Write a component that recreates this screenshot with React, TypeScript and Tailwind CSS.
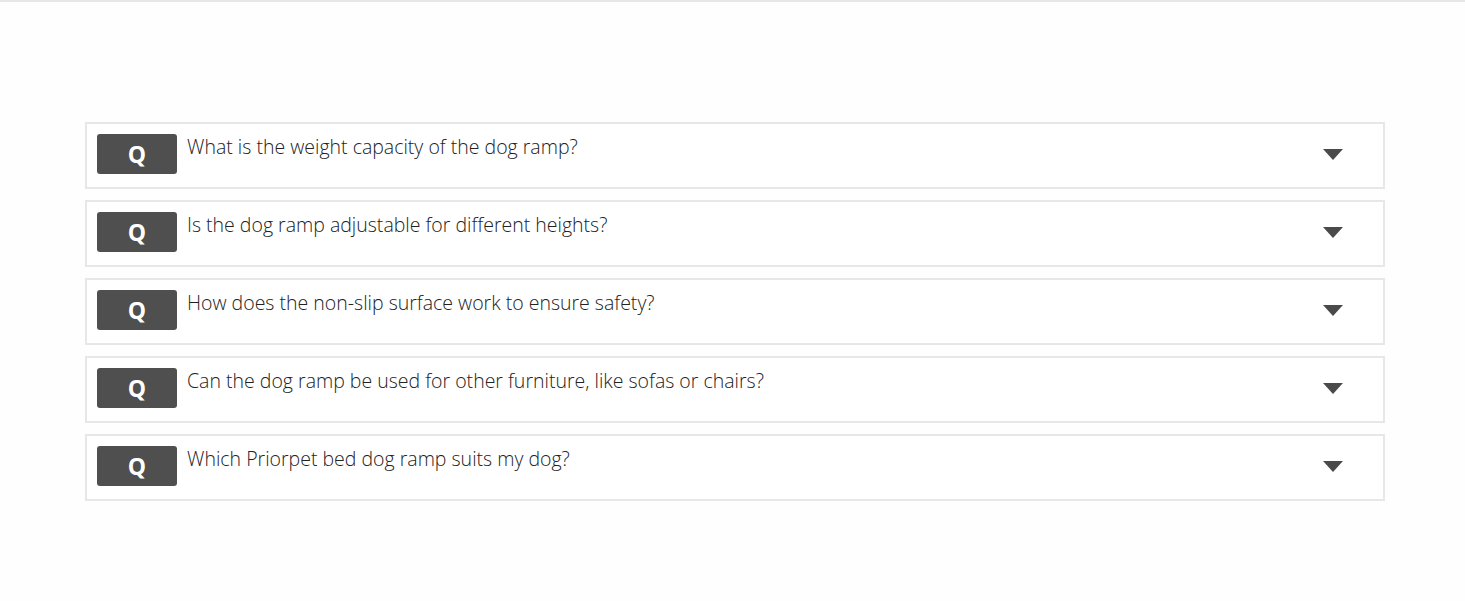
const questions = [
  "What is the weight capacity of the dog ramp?",
  "Is the dog ramp adjustable for different heights?",
  "How does the non-slip surface work to ensure safety?",
  "Can the dog ramp be used for other furniture, like sofas or chairs?",
  "Which Priorpet bed dog ramp suits my dog?",
]

function FaqItem({ question }: { question: string }) {
  return (
    <div className="flex items-start border-2 border-[#e7e7e7] bg-white pt-[10px] pb-[13px] pl-[10px] pr-[40px]">
      <div className="flex h-[40px] w-[80px] shrink-0 items-center justify-center rounded-[3px] bg-[#4f4f4f] text-[23px] font-bold text-white">
        Q
      </div>
      <div className="ml-[10px] flex-1 text-[19.5px] font-light leading-[25px] text-[#222]">{question}</div>
      <div className="flex h-[40px] items-center">
        <svg width="20" height="11" viewBox="0 0 20 11">
          <path d="M0 0 L20 0 L10 11 Z" fill="#4a4a4a" />
        </svg>
      </div>
    </div>
  )
}

export default function App() {
  return (
    <div className="min-h-[601px] w-full bg-[#fefefe]" style={{ fontFamily: '"Open Sans", "Noto Sans", sans-serif' }}>
      <div className="h-[2px] w-full bg-[#e6e6e6]" />
      <div className="flex flex-col gap-[11px] pl-[85px] pr-[80px] pt-[120px]">
        {questions.map((q) => (
          <FaqItem key={q} question={q} />
        ))}
      </div>
    </div>
  )
}
